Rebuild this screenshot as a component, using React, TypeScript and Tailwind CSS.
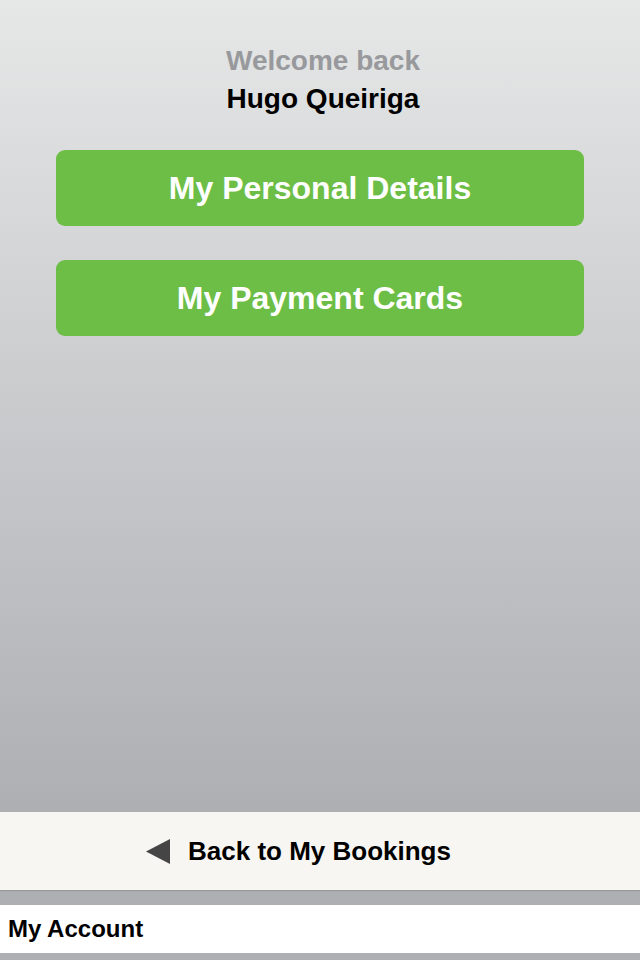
import React from 'react';

const font = { fontFamily: '"Liberation Sans", Arial, Helvetica, sans-serif' };

const MenuButton: React.FC<{ label: string }> = ({ label }) => (
  <button
    type="button"
    className="h-[76px] w-full rounded-[9px] bg-[#6dbe46] text-[32px] font-bold text-white"
  >
    {label}
  </button>
);

const App: React.FC = () => {
  return (
    <div
      className="flex h-[960px] w-[640px] flex-col bg-[#aeafb3] antialiased"
      style={font}
    >
      <div className="h-[812px] bg-gradient-to-b from-[#e6e7e7] to-[#aeafb3] px-14 pt-[42px]">
        <div className="pl-[6px] text-center text-[28px] font-bold leading-[38px]">
          <p className="text-[#98999c]">Welcome back</p>
          <p className="text-black">Hugo Queiriga</p>
        </div>

        <div className="mt-8 flex flex-col gap-[34px]">
          <MenuButton label="My Personal Details" />
          <MenuButton label="My Payment Cards" />
        </div>
      </div>

      <div className="flex h-[78px] items-center justify-center bg-[#f7f6f2] pr-[43px] shadow-[0_1px_1px_rgba(0,0,0,0.12)]">
        <svg width="24" height="25" viewBox="0 0 24 25" className="mr-[18px]">
          <polygon points="0,12.5 24,0 24,25" fill="#454545" />
        </svg>
        <span className="text-[26px] font-bold text-black">Back to My Bookings</span>
      </div>

      <div className="mt-[15px] flex h-[48px] items-center bg-white px-2">
        <span className="text-[24px] font-bold text-black">My Account</span>
      </div>
    </div>
  );
};

export default App;
